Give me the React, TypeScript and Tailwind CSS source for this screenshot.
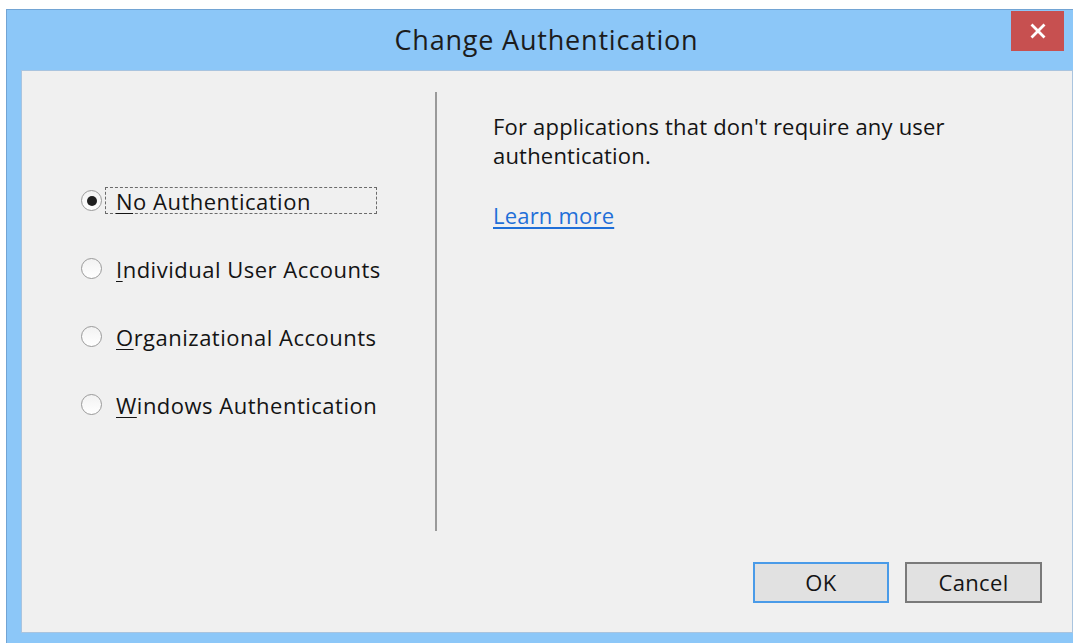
import React, { useState } from 'react';

type AuthOption = {
  key: string;
  accel: string;
  rest: string;
};

const OPTIONS: AuthOption[] = [
  { key: 'none', accel: 'N', rest: 'o Authentication' },
  { key: 'individual', accel: 'I', rest: 'ndividual User Accounts' },
  { key: 'org', accel: 'O', rest: 'rganizational Accounts' },
  { key: 'windows', accel: 'W', rest: 'indows Authentication' }
];

const font = "font-['Open_Sans','Noto_Sans',sans-serif]";

function Radio({ checked }: { checked: boolean }) {
  return (
    <span className="grid h-[21px] w-[21px] shrink-0 place-items-center rounded-full border-[1.5px] border-[#9a9a9a] bg-gradient-to-b from-[#f2f2f2] to-white">
      {checked && <span className="h-[10px] w-[10px] rounded-full bg-[#202020]" />}
    </span>
  );
}

export default function App() {
  const [selected, setSelected] = useState('none');

  return (
    <div className={`h-[643px] w-[1073px] overflow-hidden bg-white pl-[6px] pt-[9px] ${font}`}>
      <div className="flex h-[634px] w-[1067px] flex-col border-l border-t border-[#72a4d4] bg-[#8cc7f8]">
        {/* title bar */}
        <div className="flex h-[60px] items-start pl-[22px] pr-[9px] pt-px">
          <div className="w-[53px] shrink-0" />
          <div className="flex h-[59px] flex-1 items-center justify-center text-[27px] tracking-[0.8px] text-[#1c1c1c]">
            Change Authentication
          </div>
          <button
            type="button"
            aria-label="Close"
            className="grid h-[40px] w-[53px] shrink-0 place-items-center bg-[#c75050]">
            <svg width="16" height="16" viewBox="0 0 16 16">
              <path d="M2.5 2.5 L13.5 13.5 M13.5 2.5 L2.5 13.5" stroke="white" strokeWidth="2.8" strokeLinecap="square" />
            </svg>
          </button>
        </div>

        {/* client area */}
        <div className="ml-[14px] flex h-[563px] w-[1052px] flex-col border border-[#a9c4df] bg-[#f0f0f0] pt-[21px]">
          <div className="flex h-[439px]">
            <div className="flex w-[413px] flex-col gap-[41px] pl-[59px] pt-[95px]">
              {OPTIONS.map((opt) => (
                <label
                  key={opt.key}
                  className="flex cursor-default items-center gap-[3px]"
                  onClick={() => setSelected(opt.key)}>
                  <Radio checked={selected === opt.key} />
                  <span
                    className={`flex h-[27px] w-[272px] items-center border border-dashed pl-[10px] ${
                    opt.key === 'none' ? 'border-[#6b6b6b]' : 'border-transparent'}`
                    }>
                    <span className="whitespace-nowrap text-[22px] leading-none tracking-[0.5px] text-[#141414]">
                      <span className="underline decoration-1 underline-offset-[3px]">{opt.accel}</span>
                      {opt.rest}
                    </span>
                  </span>
                </label>
              ))}
            </div>
            <div className="w-[2px] bg-[#9a9a9a]" />
            <div className="flex-1 pl-[56px] pt-[20px] text-[22px] leading-[29px] tracking-[0.2px] text-[#141414]">
              <p>For applications that don't require any user<br />authentication.</p>
              <a href="#" className="mt-[31px] inline-block text-[#1f6fd8] underline underline-offset-[3px]">
                Learn more
              </a>
            </div>
          </div>

          <div className="flex justify-end gap-[16px] pr-[30px] pt-[31px] tracking-[0.35px]">
            <button
              type="button"
              className="h-[41px] w-[136px] border-2 border-[#4a9be8] bg-[#e1e1e1] text-[22px] text-[#141414]">
              OK
            </button>
            <button
              type="button"
              className="h-[41px] w-[137px] border-2 border-[#7a7a7a] bg-[#e1e1e1] text-[22px] text-[#141414]">
              Cancel
            </button>
          </div>
        </div>
      </div>
    </div>
  );
}
